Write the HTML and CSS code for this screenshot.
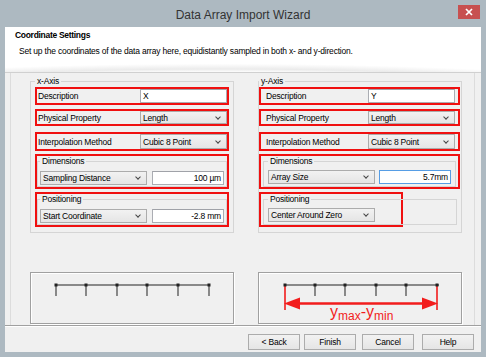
FILE: index.html
```html
<!DOCTYPE html>
<html lang="en">
<head>
  <meta charset="UTF-8">
  <title>Data Array Import Wizard</title>
  <link rel="stylesheet" href="styles.css">
</head>
<body>
  <div class="window">
    <div class="titlebar">
      <span></span>
      <span class="title">Data Array Import Wizard</span>
      <span class="close-btn">
        <svg width="8" height="8" viewBox="0 0 8 8"><path d="M1 1L7 7M7 1L1 7" stroke="#fff" stroke-width="1.7"/></svg>
      </span>
    </div>

    <div class="client">
      <div class="page-head">
        <h1>Coordinate Settings</h1>
        <p>Set up the coordinates of the data array here, equidistantly sampled in both x- and y-direction.</p>
      </div>

      <div class="page-body">
        <div class="panel">
          <!-- x axis -->
          <fieldset class="axis axis-x">
            <legend>x-Axis</legend>
            <div class="hl row row-desc">
              <span class="label">Description</span>
              <span class="textbox">X</span>
            </div>
            <div class="hl row row-prop">
              <span class="label">Physical Property</span>
              <span class="combo">Length</span>
            </div>
            <div class="hl row row-interp">
              <span class="label">Interpolation Method</span>
              <span class="combo">Cubic 8 Point</span>
            </div>
            <div class="hl sub">
              <fieldset class="subgroup">
                <legend>Dimensions</legend>
                <div class="pair">
                  <span class="combo combo-wide">Sampling Distance</span>
                  <span class="textbox num">100 µm</span>
                </div>
              </fieldset>
            </div>
            <div class="hl sub">
              <fieldset class="subgroup">
                <legend>Positioning</legend>
                <div class="pair">
                  <span class="combo combo-wide">Start Coordinate</span>
                  <span class="textbox num">-2.8 mm</span>
                </div>
              </fieldset>
            </div>
          </fieldset>

          <!-- y axis -->
          <fieldset class="axis axis-y">
            <legend>y-Axis</legend>
            <div class="hl row row-desc">
              <span class="label">Description</span>
              <span class="textbox">Y</span>
            </div>
            <div class="hl row row-prop">
              <span class="label">Physical Property</span>
              <span class="combo">Length</span>
            </div>
            <div class="hl row row-interp">
              <span class="label">Interpolation Method</span>
              <span class="combo">Cubic 8 Point</span>
            </div>
            <div class="hl sub">
              <fieldset class="subgroup">
                <legend>Dimensions</legend>
                <div class="pair">
                  <span class="combo combo-wide">Array Size</span>
                  <span class="textbox num focused">5.7mm</span>
                </div>
              </fieldset>
            </div>
            <div class="hl sub sub-short">
              <fieldset class="subgroup">
                <legend>Positioning</legend>
                <div class="pair">
                  <span class="combo combo-wide">Center Around Zero</span>
                </div>
              </fieldset>
            </div>
          </fieldset>

          <!-- previews -->
          <div class="preview">
            <svg width="202" height="50" viewBox="0 0 202 50">
              <line x1="24" y1="12" x2="179" y2="12" stroke="#222" stroke-width="1"/>
              <g stroke="#444" stroke-width="1.2">
                <line x1="25" y1="12" x2="25" y2="23"/>
                <line x1="55" y1="12" x2="55" y2="23"/>
                <line x1="86" y1="12" x2="86" y2="23"/>
                <line x1="116" y1="12" x2="116" y2="23"/>
                <line x1="147" y1="12" x2="147" y2="23"/>
                <line x1="178" y1="12" x2="178" y2="23"/>
              </g>
              <g fill="#222">
                <rect x="23.5" y="10.5" width="3" height="3"/>
                <rect x="53.5" y="10.5" width="3" height="3"/>
                <rect x="84.5" y="10.5" width="3" height="3"/>
                <rect x="114.5" y="10.5" width="3" height="3"/>
                <rect x="145.5" y="10.5" width="3" height="3"/>
                <rect x="176.5" y="10.5" width="3" height="3"/>
              </g>
            </svg>
          </div>
          <div class="preview">
            <svg width="202" height="50" viewBox="0 0 202 50">
              <line x1="25" y1="12" x2="180" y2="12" stroke="#222" stroke-width="1"/>
              <g stroke="#444" stroke-width="1.2">
                <line x1="56" y1="12" x2="56" y2="23"/>
                <line x1="86" y1="12" x2="86" y2="23"/>
                <line x1="117" y1="12" x2="117" y2="23"/>
                <line x1="147" y1="12" x2="147" y2="23"/>
              </g>
              <g stroke="#f21c1c" stroke-width="1.6">
                <line x1="26" y1="12" x2="26" y2="37"/>
                <line x1="178" y1="12" x2="178" y2="37"/>
                <line x1="36" y1="30.5" x2="168" y2="30.5" stroke-width="2.4"/>
              </g>
              <g fill="#f21c1c">
                <polygon points="25,30.5 41,24.5 41,36.5"/>
                <polygon points="179,30.5 163,24.5 163,36.5"/>
              </g>
              <g fill="#222">
                <rect x="24.5" y="10.5" width="3" height="3"/>
                <rect x="54.5" y="10.5" width="3" height="3"/>
                <rect x="84.5" y="10.5" width="3" height="3"/>
                <rect x="115.5" y="10.5" width="3" height="3"/>
                <rect x="145.5" y="10.5" width="3" height="3"/>
                <rect x="176.5" y="10.5" width="3" height="3"/>
              </g>
              <text class="span-label" x="71" y="44">y<tspan font-size="12" dy="3">max</tspan><tspan font-size="16" dy="-3">-y</tspan><tspan font-size="12" dy="3">min</tspan></text>
            </svg>
          </div>
        </div>
      </div>

      <div class="buttons">
        <button class="btn">&lt; Back</button>
        <button class="btn btn-finish">Finish</button>
        <button class="btn btn-cancel">Cancel</button>
        <button class="btn btn-help">Help</button>
      </div>
    </div>
  </div>
</body>
</html>
```

FILE: styles.css
```css
:root {
  --frame: #adb9c1;
  --face: #f0f0f0;
  --group-border: #d5d5d5;
  --ctl-border: #acacac;
  --highlight: #f01010;
  --text: #000;
}

body {
  margin: 0;
  background-color: #fff;
  font-family: "Liberation Sans", Arial, sans-serif;
  font-size: 8.5px;
  line-height: 10px;
  letter-spacing: -0.2px;
  color: var(--text);
}

.window {
  width: 486px;
  height: 357px;
  background-color: var(--frame);
  display: flex;
  flex-direction: column;
}

/* Title bar */
.titlebar {
  height: 27px;
  padding: 0 6px;
  display: grid;
  grid-template-columns: 1fr auto 1fr;
  flex-shrink: 0;
}

.title {
  align-self: center;
  padding-top: 2px;
  font-size: 12px;
  line-height: 14px;
  letter-spacing: 0;
  color: #333;
}

.close-btn {
  justify-self: end;
  margin-top: 5px;
  width: 22px;
  height: 14px;
  background-color: #c75050;
  display: flex;
  align-items: center;
  justify-content: center;
}

/* Client area */
.client {
  flex: 1;
  margin: 0 5px 5px;
  display: flex;
  flex-direction: column;
  background-color: var(--face);
}

.page-head {
  height: 42px;
  flex-shrink: 0;
  padding: 3px 0 0 10px;
  border-bottom: 1px solid #d0d0d0;
  background:
    radial-gradient(140% 120% at 45% 175%, #fff 62%, #ebebeb 68%, #fff 78%),
    #fff;
}

.page-head h1 {
  margin: 0;
  font-size: 8.5px;
  font-weight: bold;
  letter-spacing: -0.3px;
}

.page-head p {
  margin: 6px 0 0 4px;
}

.page-body {
  height: 252px;
  flex-shrink: 0;
  padding: 0 6px 0 5px;
  box-sizing: border-box;
}

.panel {
  height: 100%;
  box-sizing: border-box;
  border-left: 1px solid #dcdcdc;
  border-right: 1px solid #dcdcdc;
  padding: 3px 12px 0 19px;
  display: grid;
  grid-template-columns: 204px 204px;
  grid-template-rows: auto auto;
  column-gap: 24px;
  align-content: start;
}

/* Group boxes */
fieldset {
  margin: 0;
  min-width: 0;
  border: 1px solid var(--group-border);
}

legend {
  padding: 0 2px;
  line-height: 10px;
}

.axis {
  padding: 1px 4px 5px 4px;
}

.axis-y {
  padding: 1px 1px 5px 0;
}

/* Red annotation frames */
.hl {
  border: 2px solid var(--highlight);
  box-sizing: border-box;
}

.row {
  display: flex;
  justify-content: space-between;
}

.row .label {
  display: flex;
  align-items: center;
  padding-left: 1px;
}

.axis-y .row .label {
  padding-left: 5px;
}

.row .textbox,
.row .combo {
  width: 87px;
}

.axis-y .row .textbox,
.axis-y .row .combo {
  margin-right: 3px;
}

.row-desc {
  height: 18px;
}

.row-prop {
  height: 17px;
  margin-top: 4px;
}

.row-interp {
  height: 19px;
  margin-top: 6px;
}

.sub {
  height: 35px;
  margin-top: 3px;
}

.axis-y .sub {
  padding: 0 2px;
}

.sub-short {
  width: 144px;
}

.sub-short .subgroup {
  width: 194px;
  box-sizing: border-box;
}

.subgroup {
  height: 31px;
  box-sizing: border-box;
  padding: 5px 2px 1px 2px;
}

.axis-y .subgroup {
  padding: 4px 4px 1px 4px;
}

.pair {
  display: flex;
  justify-content: space-between;
  height: 14px;
}

.combo-wide {
  width: 107px;
}

.pair .textbox {
  width: 72px;
}

/* Controls */
.textbox,
.combo {
  box-sizing: border-box;
  display: flex;
  align-items: center;
  white-space: nowrap;
}

.textbox {
  background-color: #fff;
  border: 1px solid #abadb3;
  border-top-color: #a0a2a8;
  padding: 0 2px;
}

.textbox.num {
  justify-content: flex-end;
}

.textbox.focused {
  border-color: #569de5;
}

.combo {
  justify-content: space-between;
  border: 1px solid var(--ctl-border);
  background: linear-gradient(#f2f2f2, #e5e5e5);
  padding: 0 6px 0 2px;
}

.combo::after {
  content: "";
  width: 3px;
  height: 3px;
  margin-top: -2px;
  border-right: 1.3px solid #444;
  border-bottom: 1.3px solid #444;
  transform: rotate(45deg);
}

/* Preview diagrams */
.preview {
  margin-top: 39px;
  height: 52px;
  box-sizing: border-box;
  border: 1px solid #a0a0a0;
  box-shadow: inset 1px 1px 0 #fff, 1px 1px 0 #fff;
}

.preview svg {
  display: block;
}

.span-label {
  font-family: "Liberation Sans", Arial, sans-serif;
  font-size: 16px;
  letter-spacing: 0;
  fill: #f21c1c;
}

/* Button row */
.buttons {
  flex: 1;
  display: flex;
  justify-content: flex-end;
  align-items: flex-start;
  padding: 8px 7px 0 0;
  border-top: 1px solid #a0a0a0;
  box-shadow: inset 0 1px 0 #fff;
}

.btn {
  width: 52px;
  height: 16px;
  padding: 0;
  border: 1px solid var(--ctl-border);
  background: linear-gradient(#f2f2f2, #e5e5e5);
  font-family: "Liberation Sans", Arial, sans-serif;
  font-size: 8.5px;
  line-height: 10px;
  letter-spacing: -0.2px;
  color: var(--text);
}

.btn-finish {
  margin-left: 4px;
}

.btn-cancel {
  margin-left: 6px;
}

.btn-help {
  margin-left: 8px;
}
```
